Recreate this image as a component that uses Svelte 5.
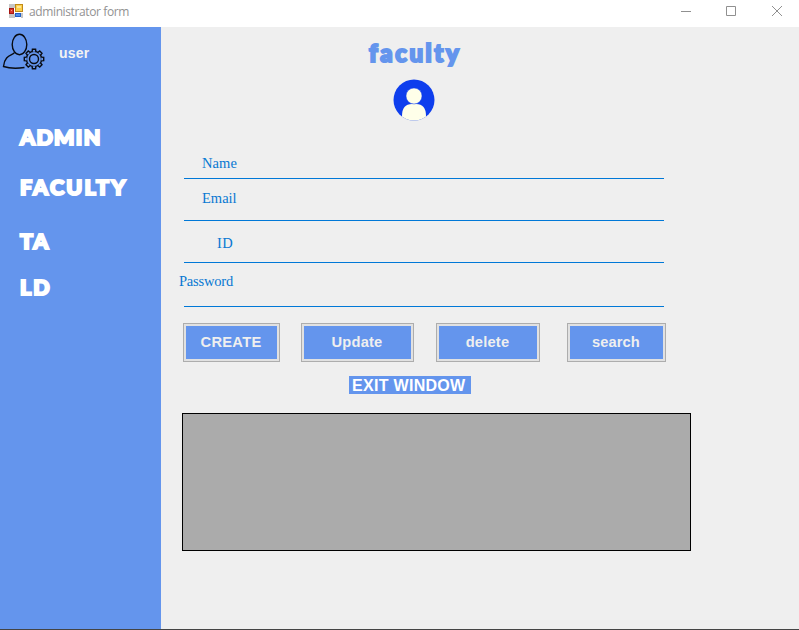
<script>
  const nav = [
    { label: 'ADMIN', row: 50, gap: 1.3 },
    { label: 'FACULTY', row: 54, gap: 2.2 },
    { label: 'TA', row: 46, gap: 1.8 },
    { label: 'LD', row: 46, gap: 2 }
  ];
  const fields = [
    { label: 'Name', height: 31, indent: 18, space: 7, spacing: 0.1 },
    { label: 'Email', height: 42, indent: 18, space: 14, spacing: 0 },
    { label: 'ID', height: 42, indent: 33, space: 11, spacing: 0.4 },
    { label: 'Password', height: 44, indent: -5, space: 17, spacing: -0.2 }
  ];
  const buttons = [
    { label: 'CREATE', width: 97, gap: 21, spacing: 0.3, shift: 1 },
    { label: 'Update', width: 113, gap: 22, spacing: 0.2, shift: 1 },
    { label: 'delete', width: 104, gap: 27, spacing: 0.2, shift: 1 },
    { label: 'search', width: 99, gap: 0, spacing: 0.1, shift: 1 }
  ];
  const teeth = [0, 45, 90, 135, 180, 225, 270, 315];
</script>

<div class="window">
  <header>
    <svg class="app" width="14" height="14" viewBox="0 0 14 14">
      <path d="M0 0h6v4H0zM0 10h6v4H0zM12 9h2v5h-2z" fill="#c6c6c6" />
      <rect x="6.500" y=".5" width="7" height="7" fill="#fbd04c" stroke="#c18a16" />
      <rect x="8" y="2" width="4" height="2" fill="#ffe698" />
      <rect x=".5" y="4.500" width="4" height="5" fill="#d8362b" stroke="#a51612" />
      <rect x="2" y="6" width="1" height="1" fill="#f69b88" />
      <rect x="6.500" y="9.500" width="5" height="3" fill="#4f8cf0" stroke="#2460c4" />
    </svg>
    <span class="caption">administrator form</span>
    <svg class="controls" width="104" height="14" viewBox="0 0 104 14" fill="none" stroke="#909090">
      <path d="M0 6.500h10M45.500 1.500h9v9h-9zM91 1l10 10M101 1L91 11" />
    </svg>
  </header>
  <div class="body">
    <aside>
      <div class="profile">
        <svg width="46" height="38" viewBox="0 0 46 38" fill="none" stroke="#080b12" stroke-width="1.400">
          <ellipse cx="19.500" cy="11.500" rx="7.300" ry="10.200" />
          <path d="M14.500 19.500C13 22.500 4.500 21.500 3.500 33.500Q12 36.300 24.500 34.500" />
          <circle cx="34" cy="26" r="4.500" />
          <circle cx="34" cy="26" r="7.600" />
          {#each teeth as angle}
            <path d="M32.100 18.800l.3-2.500h3.200l.3 2.500" fill="#6495ed" transform="rotate({angle} 34 26)" />
          {/each}
        </svg>
        <span>user</span>
      </div>
      <nav>
        {#each nav as item}
          <div style:height="{item.row}px"><span style:letter-spacing="{item.gap}px">{item.label}</span></div>
        {/each}
      </nav>
    </aside>
    <main>
      <h1>faculty</h1>
      <svg class="avatar" width="42" height="42" viewBox="0 0 42 42">
        <defs><clipPath id="disc"><circle cx="21" cy="21" r="20.500" /></clipPath></defs>
        <g clip-path="url(#disc)">
          <rect width="42" height="42" fill="#0e3eed" />
          <path d="M9 42V37Q9 25 19 25h4q10 0 10 12v5z" fill="#ffffe9" />
          <circle cx="21" cy="17" r="8" fill="#ffffe9" stroke="#0e3eed" stroke-width=".5" />
        </g>
      </svg>
      <form>
        {#each fields as field}
          <div class="field" style:height="{field.height}px" style:padding-bottom="{field.space}px">
            <label style:margin-left="{field.indent}px" style:letter-spacing="{field.spacing}px">{field.label}</label>
          </div>
        {/each}
      </form>
      <div class="actions">
        {#each buttons as button}
          <button style:width="{button.width}px" style:margin-right="{button.gap}px" style:letter-spacing="{button.spacing}px" style:padding-right="{button.shift}px">{button.label}</button>
        {/each}
      </div>
      <div class="exit">EXIT WINDOW</div>
      <div class="grid"></div>
    </main>
  </div>
</div>

<style>
  .window { width: 799px; height: 630px; box-sizing: border-box; display: flex; flex-direction: column; border-bottom: 1px solid #444; background: #efefef; font-family: "Liberation Sans", Arial, sans-serif; overflow: hidden; }
  header { height: 27px; flex: none; display: flex; background: white; }
  .app { margin: 4px 0 0 9px; }
  .caption { margin: 4px 0 0 6px; font: 12px/16px "Open Sans", sans-serif; letter-spacing: -.38px; color: #929292; white-space: nowrap; }
  .controls { margin: 5px 14px 0 auto; }
  .body { flex: 1; display: flex; }
  aside { width: 161px; background: #6495ed; }
  .profile { height: 85px; display: flex; color: #f3f3f3; font-weight: bold; font-size: 14px; line-height: 16px; letter-spacing: .2px; }
  .profile svg { margin-top: 6px; }
  .profile span { margin: 18px 0 0 13px; }
  nav { padding: 0 0 0 20px; color: white; font: 900 21.500px/50px Lato, sans-serif; -webkit-text-stroke: 2.100px white; }
  nav div { white-space: nowrap; }
  main { width: 638px; display: flex; flex-direction: column; }
  h1 { margin: 10px 0 0 208px; height: 32px; color: #6495ed; font: 900 24px/32px Lato, sans-serif; letter-spacing: 2.600px; -webkit-text-stroke: 2.100px #6495ed; }
  .avatar { margin: 10px 0 0 232px; }
  form { margin: 27px 0 0 23px; width: 480px; }
  .field { box-sizing: border-box; border-bottom: 1px solid #0078d7; display: flex; align-items: flex-end; color: #0878d2; font: 14.500px/16px "Liberation Serif", serif; }
  .actions { margin: 16px 0 0 22px; display: flex; }
  button { height: 39px; flex: none; box-sizing: border-box; border: 1px solid #adadad; box-shadow: inset 0 0 0 2px #e1e1e1; background: #6495ed; color: #efefef; font: bold 14.670px "Liberation Sans", sans-serif; padding: 0 0 2px; }
  .exit { width: 122px; height: 18px; box-sizing: border-box; margin: 14px 0 0 188px; padding-left: 3px; background: #6495ed; color: white; font: bold 16px/19px "Liberation Sans", sans-serif; letter-spacing: .3px; white-space: nowrap; }
  .grid { width: 509px; height: 138px; box-sizing: border-box; margin: 19px 0 0 21px; background: #ababab; border: 1px solid black; }
</style>
